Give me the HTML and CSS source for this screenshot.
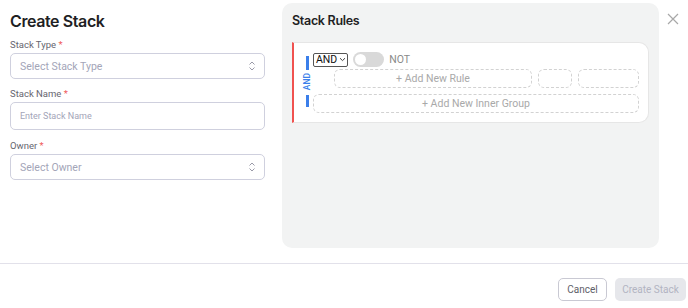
FILE: index.html
```html
<!DOCTYPE html>
<html lang="en">
<head>
    <meta charset="UTF-8">
    <title>Create Stack</title>
    <link rel="stylesheet" href="styles.css">
</head>
<body>
    <div class="modal">
        <div class="modal-body">
            <div class="form-col">
                <h1>Create Stack</h1>
                <div class="field">
                    <label>Stack Type <span class="req">*</span></label>
                    <div class="select">
                        <span>Select Stack Type</span>
                        <svg width="8" height="10" viewBox="0 0 8 10"><path d="M1.5 3.5L4 1L6.5 3.5M1.5 6.5L4 9L6.5 6.5" fill="none" stroke="#9a9aa8" stroke-width="1"/></svg>
                    </div>
                </div>
                <div class="field">
                    <label>Stack Name <span class="req">*</span></label>
                    <div class="input">Enter Stack Name</div>
                </div>
                <div class="field">
                    <label>Owner <span class="req">*</span></label>
                    <div class="select">
                        <span>Select Owner</span>
                        <svg width="8" height="10" viewBox="0 0 8 10"><path d="M1.5 3.5L4 1L6.5 3.5M1.5 6.5L4 9L6.5 6.5" fill="none" stroke="#9a9aa8" stroke-width="1"/></svg>
                    </div>
                </div>
            </div>
            <div class="rules-panel">
                <h2>Stack Rules</h2>
                <div class="group-card">
                    <div class="combinator">
                        <span class="bar"></span>
                        <span class="comb-text">AND</span>
                        <span class="bar"></span>
                    </div>
                    <div class="group-content">
                        <div class="group-head">
                            <div class="and-select">AND
                                <svg width="7" height="5" viewBox="0 0 7 5"><path d="M1 1.2L3.5 3.6L6 1.2" fill="none" stroke="#444" stroke-width="1"/></svg>
                            </div>
                            <div class="toggle"><span class="knob"></span></div>
                            <span class="not">NOT</span>
                        </div>
                        <div class="rule-row">
                            <div class="dashed add-rule">+ Add New Rule</div>
                            <div class="dashed small-box"></div>
                            <div class="dashed mid-box"></div>
                        </div>
                        <div class="dashed add-group">+ Add New Inner Group</div>
                    </div>
                </div>
            </div>
            <div class="close">
                <svg width="12" height="12" viewBox="0 0 12 12"><path d="M1 1L11 11M11 1L1 11" stroke="#a8a8a8" stroke-width="1.2"/></svg>
            </div>
        </div>
        <div class="modal-footer">
            <button class="btn cancel">Cancel</button>
            <button class="btn create">Create Stack</button>
        </div>
    </div>
</body>
</html>
```

FILE: styles.css
```css
body {
    margin: 0;
    font-family: 'Roboto', 'Inter', sans-serif;
    background-color: #fff;
    color: #1f1f24;
}
.modal {
    width: 688px;
    height: 308px;
    display: flex;
    flex-direction: column;
}
.modal-body {
    display: flex;
    height: 264px;
    border-bottom: 1px solid #e2e1ea;
    box-sizing: border-box;
}
.form-col {
    width: 255px;
    padding: 10px 0 0 10px;
}
h1 {
    font-family: 'Inter', sans-serif;
    font-size: 16px;
    font-weight: 600;
    letter-spacing: -0.4px;
    margin: 0 0 7px;
    line-height: 22px;
}
.field {
    margin-bottom: 9px;
}
.field label {
    display: block;
    font-size: 9.5px;
    color: #66666f;
    line-height: 12px;
    margin-bottom: 2px;
}
.req {
    color: #ef5a5a;
}
.select, .input {
    box-sizing: border-box;
    height: 26px;
    border: 1px solid #cfd0de;
    border-radius: 5px;
    display: flex;
    align-items: center;
    justify-content: space-between;
    padding: 0 8px 0 9px;
    font-size: 10.5px;
    color: #a3a5b8;
}
.field + .field .input {
    height: 28px;
    font-size: 9px;
    padding-left: 9px;
}
.field:last-child {
    padding-top: 1px;
}
.rules-panel {
    margin: 3px 0 0 17px;
    width: 357px;
    height: 225px;
    padding: 9px 10px 11px;
    background-color: #f2f3f3;
    border-radius: 10px;
}
h2 {
    font-family: 'Inter', sans-serif;
    font-size: 12.5px;
    font-weight: 600;
    letter-spacing: -0.3px;
    margin: 0 0 12px;
    line-height: 18px;
}
.group-card {
    display: flex;
    background-color: #fff;
    border: 1px solid #e6e6e6;
    border-left: 2px solid #f0524f;
    border-radius: 0 10px 10px 0;
    padding: 8px 10px 9px 10px;
}
.combinator {
    display: flex;
    flex-direction: column;
    align-items: center;
    width: 6px;
    margin-right: 3px;
    padding-top: 5px;
}
.bar {
    width: 3px;
    height: 14px;
    background-color: #3b7fea;
}
.bar:last-child {
    height: 12px;
}
.comb-text {
    writing-mode: vertical-rl;
    transform: rotate(180deg);
    font-size: 8.5px;
    color: #3b7fea;
    font-weight: 500;
    margin: 3px 0 5px;
    line-height: 8px;
}
.group-content {
    flex: 1;
}
.group-head {
    display: flex;
    align-items: center;
    height: 15px;
    padding-top: 1px;
}
.and-select {
    display: flex;
    align-items: center;
    gap: 2px;
    border: 1px solid #555;
    border-radius: 2px;
    font-size: 10.5px;
    line-height: 12px;
    padding: 0 1px 0 2px;
    color: #111;
}
.toggle {
    width: 31px;
    height: 15px;
    border-radius: 8px;
    background-color: #d9d9d9;
    margin-left: 5px;
    position: relative;
}
.knob {
    position: absolute;
    left: 2px;
    top: 2px;
    width: 11px;
    height: 11px;
    border-radius: 50%;
    background-color: #fff;
}
.not {
    font-size: 10.5px;
    color: #8a8a8a;
    margin-left: 5px;
}
.dashed {
    border: 1px dashed #d2d2d2;
    border-radius: 6px;
    height: 19px;
    box-sizing: border-box;
    font-size: 10.5px;
    color: #a9a9a9;
    display: flex;
    align-items: center;
    justify-content: center;
}
.rule-row {
    display: flex;
    gap: 6px;
    margin: 2px 0 0 21px;
}
.add-rule {
    width: 198px;
}
.small-box {
    width: 34px;
}
.mid-box {
    width: 61px;
}
.add-group {
    margin-top: 6px;
    width: 326px;
}
.close {
    margin: 10px 0 0 8px;
}
.modal-footer {
    display: flex;
    justify-content: flex-end;
    gap: 8px;
    padding: 14px 2px 0 0;
}
.btn {
    font-family: 'Roboto', sans-serif;
    font-size: 10px;
    height: 23px;
    border-radius: 5px;
}
.cancel {
    width: 49px;
    background-color: #fff;
    border: 1px solid #c9c9d3;
    color: #5e5e68;
}
.create {
    width: 71px;
    background-color: #e6e7eb;
    border: none;
    color: #b2b4c2;
}
```
